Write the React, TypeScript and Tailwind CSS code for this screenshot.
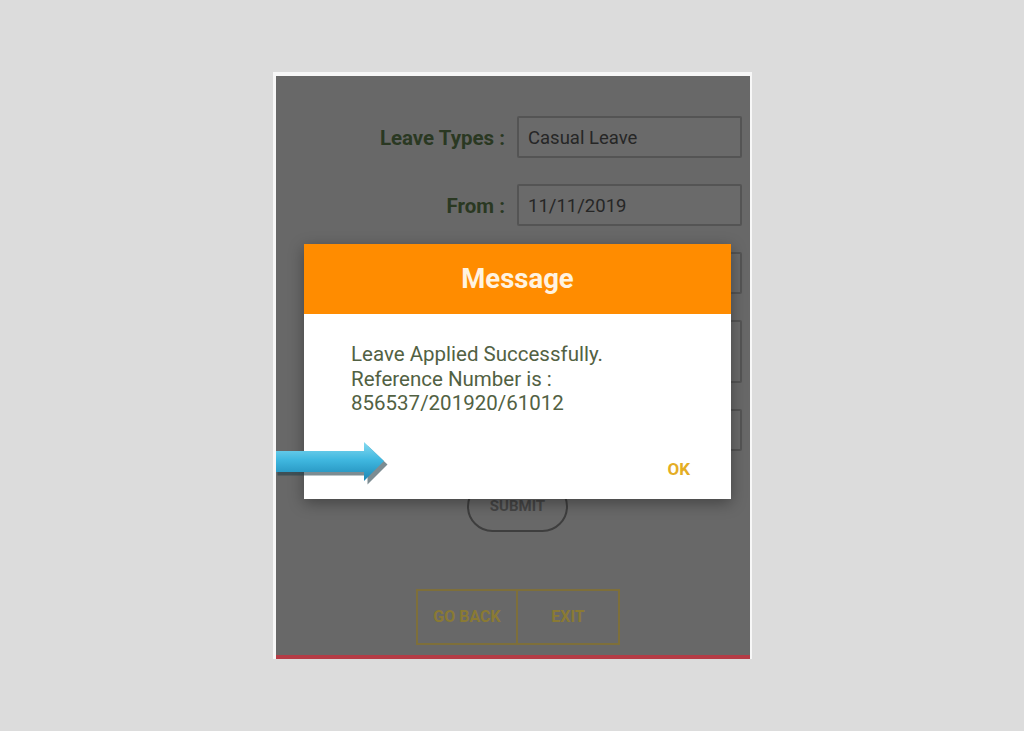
import React from "react";

const font = { fontFamily: "Roboto, 'Noto Sans', sans-serif" };

function Row({ label, h = "h-[42px]", value }: { label?: string; h?: string; value?: string }) {
  return (
    <div className="flex items-center">
      <div className="w-[229px] pt-[3px] text-right text-[20.5px] font-bold text-[#2a3822]">{label}</div>
      <div className={`ml-[12px] w-[225px] ${h} border-2 border-[#545454] rounded-[2px] bg-[#6a6a6a] flex items-center pl-[9px] pt-[3px] text-[18.5px] text-[#262626]`}>
        {value}
      </div>
    </div>
  );
}

function Arrow() {
  return (
    <svg width="112" height="44" viewBox="0 0 112 44" className="absolute left-[0px] top-[366px]">
      <defs>
        <linearGradient id="sh" x1="0" y1="0" x2="0" y2="1">
          <stop offset="0" stopColor="#86daf0" />
          <stop offset="0.45" stopColor="#40b8e0" />
          <stop offset="1" stopColor="#1c86b4" />
        </linearGradient>
      </defs>
      <path d="M0 11 H90 V2 L110 21 L90 41 V32 H0 Z" fill="#243f49" opacity="0.6" transform="translate(1.5,1.5)" />
      <path d="M0 9 H88 V0 L108 19 L88 39 V30 H0 Z" fill="url(#sh)" />
    </svg>
  );
}

export default function App() {
  return (
    <div className="w-[1024px] h-[731px] bg-[#dcdcdc] pl-[273px] pt-[72px]" style={font}>
      <div className="w-[479px] h-[587px] bg-[#f7f7f7] pl-[3px] pt-[4px] pr-[2px] pb-[0px]">
        <div className="relative w-[474px] h-[583px] bg-[#686868] flex flex-col overflow-hidden">
          <div className="flex flex-col pt-[40px] gap-[26px]">
            <Row label="Leave Types :" value="Casual Leave" />
            <Row label="From :" value="11/11/2019" />
            <Row />
            <Row h="h-[63px]" />
            <Row />
          </div>
          <div className="flex justify-center mt-[30px] pl-[9px]">
            <div className="w-[101px] h-[51px] rounded-[26px] border-2 border-[#3e3e3e] flex items-center justify-center text-[15px] font-bold text-[#454545]">
              SUBMIT
            </div>
          </div>
          <div className="flex justify-center mt-[57px] pl-[10px]">
            <div className="w-[102px] h-[56px] border-2 border-[#7e6f3a] flex items-center justify-center text-[16px] font-bold text-[#8a7a34]">
              GO BACK
            </div>
            <div className="w-[102px] h-[56px] border-2 border-l-0 border-[#7e6f3a] flex items-center justify-center text-[16px] font-bold text-[#8a7a34]">
              EXIT
            </div>
          </div>
          <div className="mt-auto h-[4px] bg-[#b53c46]" />

          <div className="absolute left-[28px] top-[168px] w-[427px] h-[255px] bg-white flex flex-col shadow-[0_4px_14px_rgba(0,0,0,0.35)]">
            <div className="h-[70px] bg-[#ff8c00] flex items-center justify-center text-[27.5px] font-bold text-[#fff3e0]">
              Message
            </div>
            <div className="pl-[47px] pt-[28px] text-[20.5px] leading-[24.5px] text-[#526143]">
              <div>Leave Applied Successfully.</div>
              <div>Reference Number is :</div>
              <div>856537/201920/61012</div>
            </div>
            <div className="mt-auto flex justify-end pr-[41px] pb-[17px]">
              <span className="text-[17px] font-bold text-[#e4ad24]">OK</span>
            </div>
          </div>
          <Arrow />
        </div>
      </div>
    </div>
  );
}
